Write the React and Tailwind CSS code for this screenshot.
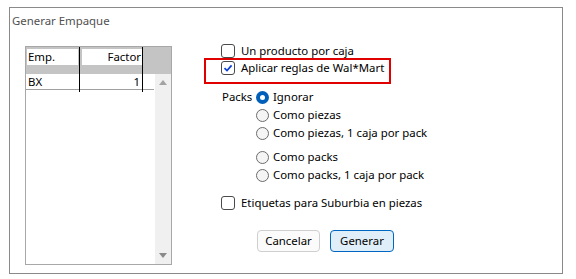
import React from 'react';

function CheckBox({ checked }) {
  return (
    <span className="w-[14px] h-[14px] shrink-0 rounded-[3px] border border-[#4a4a4a] bg-white flex items-center justify-center">
      {checked && (
        <svg width="10" height="10" viewBox="0 0 10 10">
          <path d="M1.5 5.2 L4 7.6 L8.6 2.4" fill="none" stroke="#0a3fd8" strokeWidth="1.7" />
        </svg>
      )}
    </span>
  );
}

function Radio({ checked }) {
  return checked ? (
    <span className="w-[13px] h-[13px] shrink-0 rounded-full bg-[#005fb8] flex items-center justify-center">
      <span className="w-[5px] h-[5px] rounded-full bg-white" />
    </span>
  ) : (
    <span className="w-[13px] h-[13px] shrink-0 rounded-full border border-[#6b6b6b] bg-[#f5f5f5]" />
  );
}

const packOptions = [
  { label: 'Ignorar', checked: true },
  { label: 'Como piezas' },
  { label: 'Como piezas, 1 caja por pack' },
  { label: 'Como packs', gap: true },
  { label: 'Como packs, 1 caja por pack' },
];

export default function App() {
  return (
    <div className="w-[576px] h-[279px] bg-white pt-[7px] pl-[9px] text-[11.4px] text-black whitespace-nowrap" style={{ fontFamily: '"Noto Sans", "Open Sans", sans-serif' }}>
      <div className="w-[554px] h-[267px] border border-[#8a8a8a]">
        {/* Title */}
        <div className="h-[20px] pl-[2px] pt-[5px] leading-[16px] text-[#505050]">Generar Empaque</div>

        <div className="flex items-start">
          {/* Packaging grid */}
          <div className="ml-[15px] mt-[18px] w-[147px] h-[219px] border border-[#a8a8a8] bg-white flex flex-col">
            <div className="h-[27px] bg-[#c4c4c4] flex">
              <div className="w-[54px] border-r border-black pl-[1px] pt-[2px]">
                <div className="w-[51px] h-[16px] bg-white leading-[16px] pl-[1px]">Emp.</div>
              </div>
              <div className="w-[63px] border-r border-black pl-[2px] pt-[2px]">
                <div className="w-[60px] h-[16px] bg-white leading-[16px] text-right pr-[1px]">Factor</div>
              </div>
            </div>
            <div className="flex flex-1">
              <div className="w-[128px]">
                <div className="h-[16px] border-b border-[#a0a0a0] flex leading-[16px]">
                  <div className="w-[54px] border-r border-black pl-[2px] h-[18px]">BX</div>
                  <div className="w-[63px] border-r border-black text-right pr-[2px] h-[18px]">1</div>
                </div>
              </div>
              <div className="ml-auto w-[16px] bg-[#f0f0f0] flex flex-col items-center justify-between pt-[6px] pb-[6px]">
                <svg width="8" height="5" viewBox="0 0 8 5"><path d="M0 5 L4 0 L8 5 Z" fill="#a3a3a3" /></svg>
                <svg width="8" height="5" viewBox="0 0 8 5"><path d="M0 0 L8 0 L4 5 Z" fill="#8a8a8a" /></svg>
              </div>
            </div>
          </div>

          {/* Options */}
          <div className="ml-[32px] mt-[16px] flex flex-col">
            <div className="h-[14px] pl-[17px] flex items-center gap-[6px]">
              <CheckBox />
              <span>Un producto por caja</span>
            </div>
            <div className="w-[187px] h-[26px] border-2 border-[#e00000] pl-[15px] pt-[1px] flex items-start gap-[6px]">
              <CheckBox checked />
              <span className="leading-[14px]">Aplicar reglas de Wal*Mart</span>
            </div>

            <div className="mt-[4px] flex">
              <div className="w-[52px] pl-[18px] h-[18px] leading-[18px]">Packs</div>
              <div className="flex flex-col">
                {packOptions.map((o) => (
                  <div key={o.label} className={`h-[18px] flex items-center gap-[4px] ${o.gap ? 'mt-[6px]' : ''}`}>
                    <Radio checked={o.checked} />
                    <span>{o.label}</span>
                  </div>
                ))}
              </div>
            </div>

            <div className="mt-[10px] h-[18px] pl-[17px] flex items-center gap-[6px]">
              <CheckBox />
              <span>Etiquetas para Suburbia en piezas</span>
            </div>

            <div className="mt-[18px] ml-[53px] flex gap-[10px]">
              <button className="w-[63px] h-[22px] rounded-[4px] border border-[#cfcfcf] bg-[#fbfbfb] leading-[20px]">Cancelar</button>
              <button className="w-[64px] h-[22px] rounded-[4px] border border-[#0067c0] bg-[#e0eef9] leading-[20px]">Generar</button>
            </div>
          </div>
        </div>
      </div>
    </div>
  );
}
